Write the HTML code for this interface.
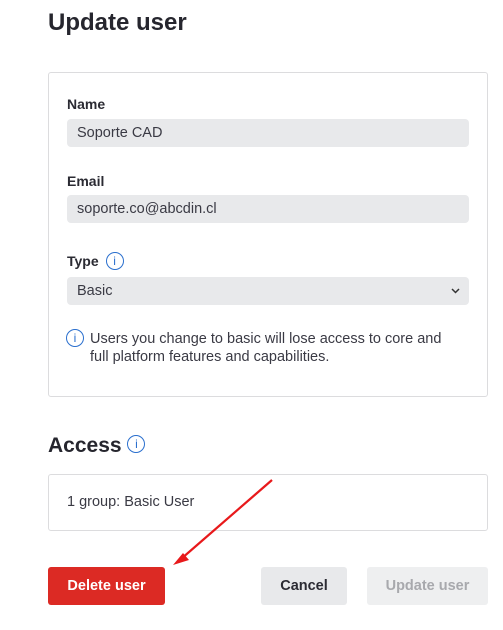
<!DOCTYPE html>
<html><head><style>
body{margin:0;width:503px;height:630px;background:#fff;font-family:"Liberation Sans",sans-serif;color:#2b2b33;position:relative;overflow:hidden}
.a{position:absolute}
h1{position:absolute;left:48px;top:9px;margin:0;font-size:24px;font-weight:bold;color:#26262e}
.card{position:absolute;left:48px;top:72px;width:438px;height:323px;border:1px solid #dcdcde;border-radius:3px}
.lbl{position:absolute;left:67px;font-size:14px;font-weight:bold;color:#2b2b33}
.inp{position:absolute;left:67px;width:402px;height:28px;background:#e8e9eb;border-radius:4px;font-size:14.5px;line-height:28px;padding-left:10px;box-sizing:border-box;color:#3a3a44}
.info{display:inline-block;width:16px;height:16px;border:1.5px solid #2a6fce;border-radius:50%;color:#2a6fce;font-size:12px;font-weight:normal;text-align:center;line-height:16px;box-sizing:content-box;vertical-align:middle}
.btn{position:absolute;top:567px;height:38px;border-radius:3px;font-size:14.5px;font-weight:bold;text-align:center;line-height:38px}
</style></head><body>
<h1>Update user</h1>
<div class="card"></div>
<div class="lbl" style="top:96px">Name</div>
<div class="inp" style="top:119px">Soporte CAD</div>
<div class="lbl" style="top:173px">Email</div>
<div class="inp" style="top:195px">soporte.co@abcdin.cl</div>
<div class="lbl" style="top:253px">Type <span class="info" style="margin-left:3px;margin-top:-3px">i</span></div>
<div class="inp" style="top:277px">Basic<svg class="a" style="left:384px;top:11px" width="9" height="6" viewBox="0 0 9 6"><path d="M1 1l3.5 3.5L8 1" stroke="#333" stroke-width="1.5" fill="none"/></svg></div>
<div class="a" style="left:66px;top:329px"><span class="info">i</span></div>
<div class="a" style="left:90px;top:330px;font-size:14.5px;line-height:18px;color:#3a3a44;width:365px">Users you change to basic will lose access to core and full platform features and capabilities.</div>
<div class="a" style="left:48px;top:434px;font-size:21px;font-weight:bold;color:#26262e">Access <span class="info" style="margin-top:-4px">i</span></div>
<div class="a" style="left:48px;top:474px;width:438px;height:55px;border:1px solid #dcdcde;border-radius:3px"></div>
<div class="a" style="left:67px;top:494px;font-size:14.5px;color:#3a3a44">1 group: Basic User</div>
<div class="btn" style="left:48px;width:117px;background:#dc2a24;color:#fff">Delete user</div>
<div class="btn" style="left:261px;width:86px;background:#e8e9eb;color:#2b2b33">Cancel</div>
<div class="btn" style="left:367px;width:121px;background:#eeeff0;color:#a8a9ad">Update user</div>
<svg class="a" style="left:0;top:0" width="503" height="630"><path d="M272 480L181 559" stroke="#e8191b" stroke-width="2.2"/><path d="M173 565l16-5-6-7z" fill="#e8191b"/></svg>
</body></html>
